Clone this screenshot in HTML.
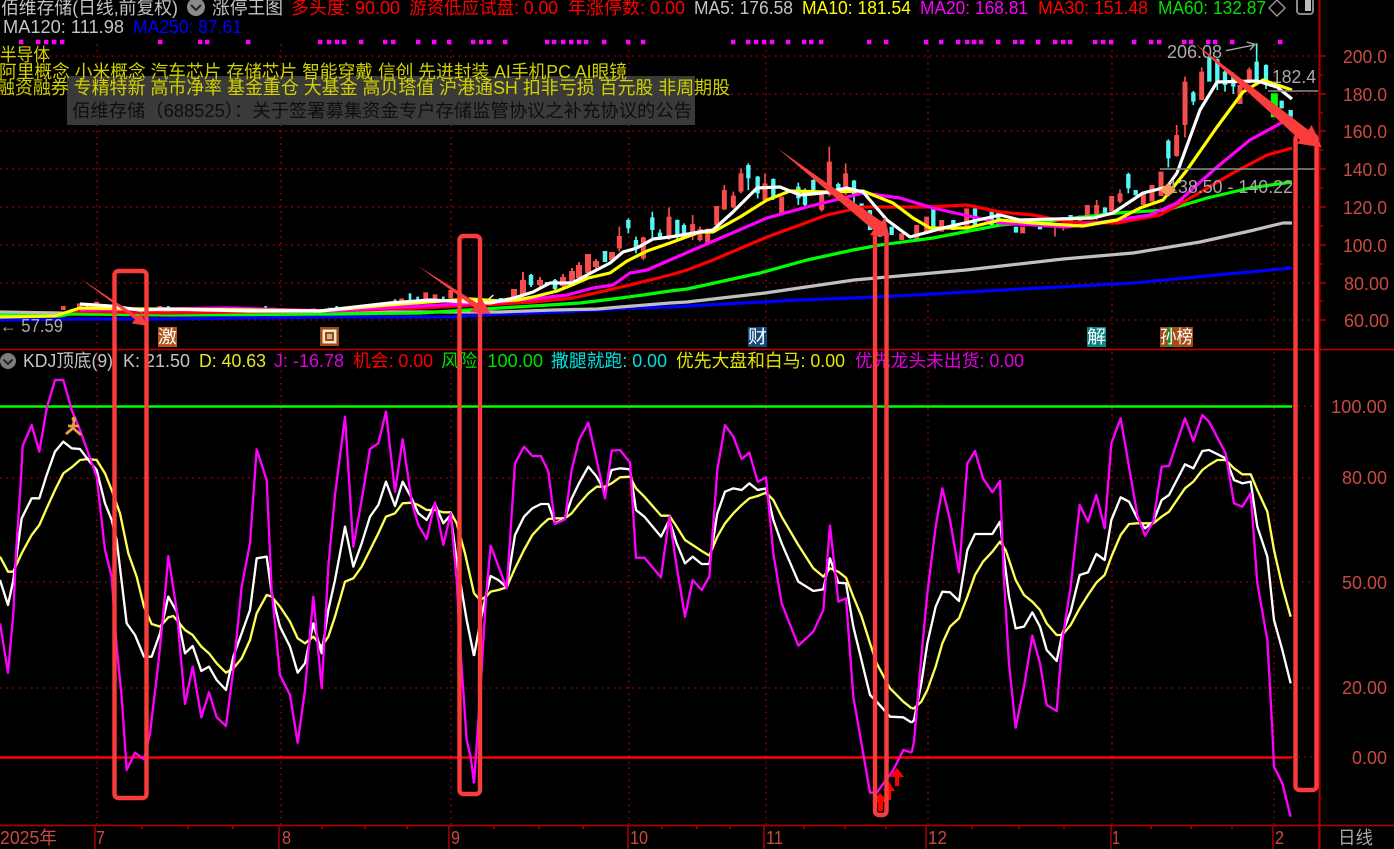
<!DOCTYPE html>
<html lang="zh">
<head>
<meta charset="utf-8">
<title>佰维存储 K线</title>
<style>
html,body{margin:0;padding:0;background:#000;width:1394px;height:849px;overflow:hidden}
svg{display:block}
text{font-family:"Liberation Sans","WenQuanYi Zen Hei","Noto Sans CJK SC",sans-serif;font-size:18px}
.ax{fill:#c94a40;font-size:18px}
.tag{fill:#d2d200;font-size:18px}
.dot{stroke:#9a0000;stroke-width:1.5;stroke-dasharray:1.6 4.6;fill:none}
.ma{fill:none;stroke-width:3.2;stroke-linejoin:round}
.k{fill:none;stroke-width:7;stroke-linejoin:round}
.ann{fill:none;stroke:#fb3c3c;stroke-width:4.4}
</style>
</head>
<body>
<svg width="1394" height="849" viewBox="0 0 1394 849" xmlns="http://www.w3.org/2000/svg">
<rect width="1394" height="849" fill="#000"/>

<!-- grid -->
<path class="dot" d="M0 56H1318M0 94H1318M0 131H1318M0 169H1318M0 207H1318M0 245H1318M0 283H1318M0 320H1318"/>
<path class="dot" d="M0 478H1318M0 582H1318M0 688H1318M1292 406H1318M1292 757H1318"/>
<path class="dot" d="M97 44V348M281 44V348M451 44V348M629 44V348M766 44V348M928 44V348M1112 44V348M1274 44V348"/>
<path class="dot" d="M97 352V825M281 352V825M451 352V825M629 352V825M766 352V825M928 352V825M1112 352V825M1274 352V825"/>

<!-- magenta signal dots -->
<path fill="none" stroke="#ff00ff" stroke-width="4.4" stroke-dasharray="4.4 100" d="M19 42H24M36 42H41M44 42H49M52 42H57M60 42H65M158 42H163M198 42H203M205 42H210M246 42H251M318 42H323M327 42H332M335 42H340M342 42H347M359 42H364M383 42H388M391 42H396M416 42H421M432 42H437M447 42H452M471 42H476M479 42H484M487 42H492M503 42H508M545 42H550M552 42H557M561 42H566M569 42H574M577 42H582M584 42H589M602 42H607M626 42H631M641 42H646M731 42H736M746 42H751M754 42H759M762 42H767M770 42H775M786 42H791M802 42H807M809 42H814M819 42H824M867 42H872M884 42H889M924 42H929M939 42H944M956 42H961M965 42H970M972 42H977M979 42H984M996 42H1001M1013 42H1018M1020 42H1025M1036 42H1041M1053 42H1058M1061 42H1066M1068 42H1073M1093 42H1098M1101 42H1106M1109 42H1114M1132 42H1137M1149 42H1154M1157 42H1162M1182 42H1187M1189 42H1194M1206 42H1211M1213 42H1218M1230 42H1235M1278 42H1283"/>

<!-- low candles -->
<g transform="translate(0 260) scale(.33333)">
<path fill="none" stroke="#f54d4d" stroke-width="14" d="M190 138V150M238 130V150M290 125V140M480 138V148M770 143V150M820 143V149M940 145V150M990 143V150M1035 140V150M1110 132V150M1135 135V145M1160 130V140M1205 115V135M1277 97V125M1305 103V120M1352 90V115"/>
<path fill="none" stroke="#54f6f6" stroke-width="8" d="M262 135V150M505 138V148M797 138V150M1010 138V150M1060 140V150M1185 118V135M1230 100V125M1253 110V130M1330 110V125"/>
<path fill="none" stroke="#fff" stroke-width="4" d="M1465 118L1480 105"/>
</g>
<!-- candles 500-620 -->
<path fill="none" stroke="#f54d4d" stroke-width="6" d="M514 289V298M523 280V295M540 280V285M563 277V286M572 271V283M579 265V278M588 254V273M596 261V267M612 252V260"/>
<path fill="none" stroke="#f54d4d" stroke-width="2" d="M523 272V297M540 277V287M563 274V288M572 268V285M579 262V280M596 259V269"/>
<path fill="none" stroke="#54f6f6" stroke-width="4.5" d="M501 298V301M531 275V285M547 282V285M555 280V289M605 251V262"/>
<path fill="none" stroke="#54f6f6" stroke-width="2" d="M531 274V287M555 279V290"/>

<!-- middle candles -->
<g transform="translate(600 130) scale(.33333)">
<path fill="none" stroke="#f54d4d" stroke-width="15" d="M58 318V355M130 322V385M207 260V320M278 282V318M300 297V330M323 297V338M350 228V285M373 180V238M400 197V232M423 130V185M495 160V210M545 200V255M665 195V240M688 95V195M737 130V190M905 310V330M950 285V335M980 260V310M1025 270V305M1100 235V290"/>
<path fill="none" stroke="#f54d4d" stroke-width="5" d="M58 290V365M130 320V390M207 232V330M278 255V330M300 290V335M323 295V345M373 165V240M400 185V235M423 115V190M495 130V215M665 190V245M688 50V200M737 100V195"/>
<path fill="none" stroke="#54f6f6" stroke-width="13" d="M85 270V295M108 330V355M157 262V300M180 308V325M232 270V315M252 285V320M445 105V145M473 140V190M520 147V205M595 170V205M615 180V225M640 150V180M715 162V185M762 152V195M785 220V245M810 240V300M840 300V320M875 290V315M1000 235V290M1060 270V300M1125 235V285M1175 245V285M1195 245V270"/>
<path fill="none" stroke="#54f6f6" stroke-width="5" d="M12 365V390M85 265V310M108 320V370M157 245V325M180 298V330M232 268V330M252 280V325M445 100V180M473 138V205M520 145V210M595 158V225M615 175V230M640 148V195M715 158V190M762 150V220"/>
</g>

<!-- right candles -->
<g transform="translate(1000 30) scale(.33333)">
<path fill="none" stroke="#f54d4d" stroke-width="15" d="M68 590V610M262 525V560M290 525V555M335 498V545M360 490V515M430 490V525M456 465V515M483 425V498M530 315V378M555 155V285M605 125V210M720 165V222M748 118V155"/>
<path fill="none" stroke="#f54d4d" stroke-width="5" d="M165 590V620M190 590V602M290 510V570M360 478V520M530 285V380M555 140V322M605 112V125M748 112V160"/>
<path fill="none" stroke="#54f6f6" stroke-width="13" d="M48 590V608M120 590V598M212 555V578M240 557V572M315 532V555M385 432V475M407 480V496M505 332V385M580 187V215M628 82V155M652 88V155M675 125V165M700 132V170M770 95V150M798 105V150M845 212V235M872 240V262"/>
<path fill="none" stroke="#54f6f6" stroke-width="5" d="M385 428V490M505 328V412M580 183V225M652 85V180M675 120V185M700 128V192M770 40V150M798 103V177"/>
<path fill="none" stroke="#00ff00" stroke-width="21" d="M823 190V262"/>
</g>

<!-- upper moving averages -->
<polyline class="ma" stroke="#0000ff" points="0,320 80,319 160,319 330,317 450,317 500,314 533,313 597,310 630,308 670,307 687,306 799,300 877,297 1022,289 1133,283 1217,275 1292,268"/>
<polyline class="ma" stroke="#c0c0c0" points="0,312 60,313 90,314 170,311 330,312 480,312 500,312 553,310 597,309 620,307 670,303 687,302 765,293 854,280 966,270 1063,259 1133,253 1200,242 1250,231 1283,223 1292,223"/>
<polyline class="ma" stroke="#00ff00" points="0,315 60,316 70,314 170,315 330,314 420,313 500,308 533,306 580,303 613,299 643,295 670,291 687,289 760,273 807,260 853,250 880,245 933,238 1000,225 1050,221 1117,213 1167,210 1207,198 1250,188 1292,182"/>
<polyline class="ma" stroke="#ff0000" points="70,311 165,313 233,312 330,311 420,308 500,304 533,302 573,298 600,292 630,285 670,275 687,270 713,260 767,237 827,215 863,207 927,207 967,205 1000,212 1033,215 1067,222 1117,223 1160,215 1187,200 1233,173 1267,155 1292,148"/>
<polyline class="ma" stroke="#ff00ff" points="80,310 165,309 225,308 330,311 400,307 500,302 533,299 567,295 593,288 613,285 630,273 647,270 670,260 723,237 767,218 807,207 863,193 900,198 933,208 1000,223 1067,227 1117,220 1150,215 1177,203 1217,167 1250,140 1292,117"/>
<polyline class="ma" stroke="#ffff00" points="0,317 55,316 80,308 140,309 165,309 250,310 320,311 400,304 470,299 500,301 517,300 533,297 557,291 572,285 588,278 610,273 627,261 647,251 670,243 700,232 713,232 740,217 767,200 790,191 827,192 863,191 893,203 913,218 930,228 967,228 1000,220 1033,223 1083,226 1117,220 1140,208 1163,200 1187,170 1217,127 1243,92 1263,80 1292,90"/>
<polyline class="ma" stroke="#ffffff" points="80,304 110,306 140,310 165,309 250,311 320,311 390,303 430,300 490,303 500,301 514,298 533,292 550,283 572,283 587,275 610,263 623,252 637,248 653,239 670,237 700,232 713,230 733,212 757,188 780,187 800,195 823,193 847,188 863,192 887,220 910,237 947,227 1000,215 1020,220 1093,218 1113,213 1143,193 1167,187 1177,173 1200,110 1217,82 1257,81 1277,87 1292,99"/>

<!-- tooltip box -->
<rect x="67" y="76" width="628" height="49" fill="#3a3a38"/>
<text x="72" y="117" textLength="620" lengthAdjust="spacingAndGlyphs" fill="#0e0e0e">佰维存储（688525）：关于签署募集资金专户存储监管协议之补充协议的公告</text>

<!-- concept tags -->
<text class="tag" x="0" y="61" textLength="50" lengthAdjust="spacingAndGlyphs">半导体</text>
<text class="tag" x="-1" y="78" textLength="628" lengthAdjust="spacingAndGlyphs">阿里概念 小米概念 汽车芯片 存储芯片 智能穿戴 信创 先进封装 AI手机PC AI眼镜</text>
<text class="tag" x="-3" y="94" textLength="733" lengthAdjust="spacingAndGlyphs">融资融券 专精特新 高市净率 基金重仓 大基金 高贝塔值 沪港通SH 扣非亏损 百元股 非周期股</text>

<!-- top header -->
<text x="1" y="14" textLength="177" lengthAdjust="spacingAndGlyphs" fill="#c4c4c4">佰维存储(日线,前复权)</text>
<circle cx="196" cy="7" r="9" fill="#8a8a8a"/>
<path d="M191 5l5 5 5-5" fill="none" stroke="#222" stroke-width="2"/>
<text x="212" y="14" textLength="71" lengthAdjust="spacingAndGlyphs" fill="#c4c4c4">涨停王图</text>
<text x="291" y="14" textLength="109" lengthAdjust="spacingAndGlyphs" fill="#ff0000">多头度: 90.00</text>
<text x="409" y="14" textLength="149" lengthAdjust="spacingAndGlyphs" fill="#ff0000">游资低应试盘: 0.00</text>
<text x="568" y="14" textLength="117" lengthAdjust="spacingAndGlyphs" fill="#ff0000">年涨停数: 0.00</text>
<text x="694" y="14" textLength="99" lengthAdjust="spacingAndGlyphs" fill="#c4c4c4">MA5: 176.58</text>
<text x="802" y="14" textLength="109" lengthAdjust="spacingAndGlyphs" fill="#ffff00">MA10: 181.54</text>
<text x="920" y="14" textLength="108" lengthAdjust="spacingAndGlyphs" fill="#ff00ff">MA20: 168.81</text>
<text x="1038" y="14" textLength="110" lengthAdjust="spacingAndGlyphs" fill="#ff0000">MA30: 151.48</text>
<text x="1158" y="14" textLength="108" lengthAdjust="spacingAndGlyphs" fill="#00e000">MA60: 132.87</text>
<path d="M1277 0l8 8-8 8-8-8z" fill="none" stroke="#999" stroke-width="1.4"/>
<rect x="1297" y="-3" width="16" height="17" rx="3" fill="none" stroke="#888" stroke-width="2"/>
<rect x="1305" y="0" width="6" height="11" fill="#bbb"/>
<text x="3" y="33" textLength="121" lengthAdjust="spacingAndGlyphs" fill="#c4c4c4">MA120: 111.98</text>
<text x="133" y="33" textLength="109" lengthAdjust="spacingAndGlyphs" fill="#0000ff">MA250: 87.61</text>

<!-- price annotations -->
<path d="M1160 169H1318M1268 91H1318" stroke="#8c8c8c" stroke-width="1.4" fill="none"/>
<text x="1167" y="58" textLength="55" lengthAdjust="spacingAndGlyphs" fill="#aaa">206.08</text>
<g transform="translate(1000 30) scale(.33333)"><path d="M678 62L762 45M740 36L765 43L750 60" fill="none" stroke="#aaa" stroke-width="4"/></g>
<text x="1272" y="83" textLength="44" lengthAdjust="spacingAndGlyphs" fill="#aaa">182.4</text>
<text x="1168" y="193" textLength="125" lengthAdjust="spacingAndGlyphs" fill="#a8a8a8">138.50 - 140.22</text>
<path d="M1168 183l8 7-8 7-8-7z" fill="#f49a5a"/>
<text x="0" y="332" textLength="63" lengthAdjust="spacingAndGlyphs" fill="#aaa">← 57.59</text>

<!-- event tags -->
<rect x="158" y="327" width="19" height="20" fill="#b4561c"/>
<text x="158" y="343" textLength="19" lengthAdjust="spacingAndGlyphs" fill="#fff">激</text>
<rect x="320" y="327" width="19" height="19" fill="#9a4c12"/>
<rect x="322.5" y="329.5" width="14" height="14" fill="#f4e6d0"/>
<rect x="325" y="332" width="9" height="9" fill="#9a4c12"/>
<rect x="327" y="334" width="5" height="5" fill="#d8b078"/>
<rect x="748" y="327" width="19" height="20" fill="#144a7a"/>
<text x="748" y="343" textLength="19" lengthAdjust="spacingAndGlyphs" fill="#fff">财</text>
<rect x="1087" y="327" width="19" height="20" fill="#0a8484"/>
<text x="1087" y="343" textLength="19" lengthAdjust="spacingAndGlyphs" fill="#fff">解</text>
<rect x="1160" y="327" width="33" height="20" fill="#a04c12"/>
<rect x="1167" y="327" width="5" height="20" fill="#2a8a2a"/>
<text x="1160" y="343" textLength="33" lengthAdjust="spacingAndGlyphs" fill="#fff">孙榜</text>

<!-- panel divider -->
<path d="M0 349.5H1394" stroke="#b00000" stroke-width="1.8"/>

<!-- lower header -->
<circle cx="8" cy="361" r="8" fill="#7c7c7c"/>
<path d="M3.5 359.5l4.5 4.5 4.5-4.5" fill="none" stroke="#222" stroke-width="2"/>
<text x="23" y="367" textLength="90" lengthAdjust="spacingAndGlyphs" fill="#c4c4c4">KDJ顶底(9)</text>
<text x="123" y="367" textLength="67" lengthAdjust="spacingAndGlyphs" fill="#c4c4c4">K: 21.50</text>
<text x="199" y="367" textLength="67" lengthAdjust="spacingAndGlyphs" fill="#e6e628">D: 40.63</text>
<text x="274" y="367" textLength="70" lengthAdjust="spacingAndGlyphs" fill="#e000e0">J: -16.78</text>
<text x="353" y="367" textLength="80" lengthAdjust="spacingAndGlyphs" fill="#ff0000">机会: 0.00</text>
<text x="441" y="367" textLength="102" lengthAdjust="spacingAndGlyphs" fill="#00e000">风险: 100.00</text>
<text x="551" y="367" textLength="116" lengthAdjust="spacingAndGlyphs" fill="#00e0e0">撒腿就跑: 0.00</text>
<text x="676" y="367" textLength="169" lengthAdjust="spacingAndGlyphs" fill="#e6e600">优先大盘和白马: 0.00</text>
<text x="855" y="367" textLength="169" lengthAdjust="spacingAndGlyphs" fill="#e000e0">优先龙头未出货: 0.00</text>

<!-- reference lines -->
<path d="M0 406.5H1292" stroke="#00ff00" stroke-width="2.6"/>
<path d="M0 757.5H1292" stroke="#ff0000" stroke-width="2.6"/>

<!-- KDJ -->
<g transform="translate(0 380) scale(.33333)">
<polyline class="k" stroke="#ffff55" points="0,530 24,575 40,575 65,520 95,465 118,435 140,385 165,330 190,280 215,262 240,240 265,237 290,240 315,280 335,330 360,400 385,520 410,590 432,680 455,732 480,740 505,712 520,708 555,750 578,765 604,800 627,820 650,850 678,878 700,865 725,835 750,780 770,700 800,645 815,650 840,680 870,725 893,775 915,790 940,770 965,800 985,770 1005,710 1035,605 1060,595 1085,560 1110,510 1135,460 1158,410 1185,400 1208,370 1235,368 1255,375 1280,390 1305,390 1330,397 1352,397 1370,430 1395,520 1422,640"/>
<polyline class="k" stroke="#ffffff" points="0,600 24,675 40,600 65,415 95,355 118,355 140,285 165,215 190,185 215,205 240,207 265,240 290,270 315,370 335,420 350,480 380,730 405,765 432,830 455,830 480,760 505,650 530,695 555,820 578,798 604,873 627,860 650,900 678,930 700,830 725,760 750,690 770,535 800,530 815,640 840,740 870,800 893,878 915,850 940,730 965,820 985,690 1005,600 1035,440 1060,560 1085,490 1110,410 1135,375 1158,305 1185,378 1208,305 1235,355 1255,400 1280,420 1305,372 1330,430 1352,405 1370,540 1400,720 1422,828"/>
<polyline class="k" stroke="#ff00ff" points="0,730 24,878 40,700 48,520 64,280 68,197 95,135 118,215 140,85 165,0 190,0 215,90 240,150 265,220 290,290 315,510 335,590 350,800 365,950 380,1170 405,1118 432,1138 450,1060 475,850 490,700 505,528 530,690 555,972 578,860 604,1012 627,937 650,1012 678,1038 700,870 725,620 750,490 770,208 800,300 815,630 840,885 870,945 893,1088 915,930 940,650 965,925 985,560 1005,345 1035,110 1060,500 1085,360 1110,207 1135,190 1158,95 1185,335 1208,178 1235,365 1255,435 1280,477 1305,367 1330,495 1352,400 1370,600 1380,790 1400,1080 1412,1130 1422,1210"/>
</g>
<g transform="translate(460 380) scale(.33333)">
<polyline class="k" stroke="#ffff55" points="42,640 60,660 78,650 92,635 115,630 140,622 165,565 192,510 217,465 243,437 265,417 285,415 315,415 335,400 357,372 385,340 410,320 435,320 455,310 480,292 510,290 528,325 553,350 603,407 628,407 650,440 675,480 698,495 725,513 748,527 772,470 795,430 820,400 845,375 868,355 893,348 918,338 940,360 965,410 1015,495 1060,565 1090,590 1110,565 1135,575 1158,593 1180,650 1205,710 1230,790 1250,850 1290,925 1330,965 1355,985"/>
<polyline class="k" stroke="#ffffff" points="42,828 60,730 78,645 92,588 115,600 140,622 165,465 192,410 217,385 243,372 265,372 285,430 315,415 335,355 357,310 385,260 410,290 435,335 455,270 480,265 510,268 528,390 553,410 603,470 628,420 650,490 675,550 698,530 725,552 748,552 772,400 795,335 820,325 845,330 868,310 893,330 918,325 940,420 965,490 1015,605 1060,633 1090,628 1110,535 1135,608 1158,610 1180,740 1230,945 1250,965 1290,1010 1330,1012 1355,1028"/>
<polyline class="k" stroke="#ff00ff" points="42,1210 60,950 78,650 92,497 140,625 150,480 165,250 192,200 217,228 243,228 265,275 285,432 315,418 335,270 357,180 385,128 410,240 435,355 455,212 480,210 510,248 528,533 553,533 603,592 628,410 650,560 675,710 698,600 725,630 748,590 772,270 795,135 820,170 845,237 868,218 893,305 918,292 940,520 965,670 1015,797 1060,755 1090,690 1110,437 1135,665 1158,655 1180,950 1230,1238 1250,1238 1300,1170 1330,1110 1355,1118"/>
</g>
<g transform="translate(914 380) scale(.33333)">
<polyline class="k" stroke="#ffff55" points="-7,985 0,985 22,965 40,930 65,860 85,790 108,740 135,715 160,650 183,585 207,545 235,515 258,485 275,510 305,600 330,645 355,665 378,690 398,730 428,765 445,765 470,735 497,685 522,645 547,608 572,585 592,530 620,465 645,432 670,430 693,430 718,430 743,410 765,395 813,325 838,305 865,270 885,255 910,240 935,240 960,265 985,283 1010,283 1030,330 1060,395 1080,510 1105,620 1130,710"/>
<polyline class="k" stroke="#ffffff" points="-7,1028 0,1020 22,910 40,790 65,680 85,635 108,637 135,663 160,510 183,462 207,462 235,462 258,425 270,530 285,650 305,745 330,740 355,697 378,740 398,810 428,843 445,760 470,695 497,585 522,577 547,522 572,540 592,420 620,352 645,365 670,415 693,445 718,425 743,360 765,345 813,253 838,265 865,213 885,210 935,235 960,300 985,310 1010,305 1030,440 1060,530 1080,720 1105,810 1130,910"/>
<polyline class="k" stroke="#ff00ff" points="-7,1118 0,1085 22,830 40,640 65,440 85,325 108,420 135,577 160,250 183,213 207,295 235,337 258,303 270,600 285,850 305,1043 330,920 355,767 378,850 398,975 428,993 445,780 470,620 497,375 522,425 547,345 572,445 592,190 620,115 645,260 670,405 693,467 718,425 743,260 765,258 813,115 838,183 865,105 885,125 935,220 960,370 985,380 1010,340 1030,610 1060,780 1075,1050 1080,1160 1105,1210 1130,1310"/>
</g>

<!-- man marker -->
<g fill="none" stroke="#eb9a48" stroke-width="2.8">
<circle cx="74" cy="419" r="2.4" fill="#eb9a48" stroke="none"/>
<path d="M74 421L73 428L66 434M73 428L81 435M68 426L79 426"/>
</g>

<!-- axes -->
<path d="M1319.5 0V849" stroke="#a80000" stroke-width="2.2"/>
<path d="M0 825.5H1394" stroke="#a80000" stroke-width="1.8"/>
<path stroke="#a80000" stroke-width="1.5" d="M1319 56h7M1319 94h7M1319 131h7M1319 169h7M1319 207h7M1319 245h7M1319 283h7M1319 320h7M1319 75h4M1319 113h4M1319 150h4M1319 188h4M1319 226h4M1319 264h4M1319 301h4"/>
<path stroke="#a80000" stroke-width="1.5" d="M95 825V849M279 825V849M449 825V849M628 825V849M764 825V849M926 825V849M1111 825V849M1273 825V849M1319 825V849"/>
<path stroke="#a80000" stroke-width="1.5" d="M142 825v4M188 825v4M233 825v4M322 825v4M365 825v4M407 825v4M494 825v4M539 825v4M583 825v4M662 825v4M697 825v4M730 825v4M804 825v4M845 825v4M886 825v4M972 825v4M1019 825v4M1064 825v4M1151 825v4M1191 825v4M1232 825v4"/>

<!-- axis labels -->
<text class="ax" x="1343" y="63" textLength="44" lengthAdjust="spacingAndGlyphs">200.0</text>
<text class="ax" x="1343" y="101" textLength="44" lengthAdjust="spacingAndGlyphs">180.0</text>
<text class="ax" x="1343" y="138" textLength="44" lengthAdjust="spacingAndGlyphs">160.0</text>
<text class="ax" x="1343" y="176" textLength="44" lengthAdjust="spacingAndGlyphs">140.0</text>
<text class="ax" x="1343" y="214" textLength="44" lengthAdjust="spacingAndGlyphs">120.0</text>
<text class="ax" x="1343" y="252" textLength="44" lengthAdjust="spacingAndGlyphs">100.0</text>
<text class="ax" x="1344" y="290" textLength="45" lengthAdjust="spacingAndGlyphs">80.00</text>
<text class="ax" x="1344" y="327" textLength="45" lengthAdjust="spacingAndGlyphs">60.00</text>
<text class="ax" x="1331" y="413" textLength="56" lengthAdjust="spacingAndGlyphs">100.00</text>
<text class="ax" x="1342" y="484" textLength="45" lengthAdjust="spacingAndGlyphs">80.00</text>
<text class="ax" x="1342" y="589" textLength="45" lengthAdjust="spacingAndGlyphs">50.00</text>
<text class="ax" x="1342" y="694" textLength="45" lengthAdjust="spacingAndGlyphs">20.00</text>
<text class="ax" x="1352" y="764" textLength="35" lengthAdjust="spacingAndGlyphs">0.00</text>
<text class="ax" x="0" y="844" textLength="57" lengthAdjust="spacingAndGlyphs">2025年</text>
<text class="ax" x="96" y="844" textLength="9" lengthAdjust="spacingAndGlyphs">7</text>
<text class="ax" x="282" y="844" textLength="9" lengthAdjust="spacingAndGlyphs">8</text>
<text class="ax" x="451" y="844" textLength="9" lengthAdjust="spacingAndGlyphs">9</text>
<text class="ax" x="630" y="844" textLength="18" lengthAdjust="spacingAndGlyphs">10</text>
<text class="ax" x="766" y="844" textLength="17" lengthAdjust="spacingAndGlyphs">11</text>
<text class="ax" x="928" y="844" textLength="19" lengthAdjust="spacingAndGlyphs">12</text>
<text class="ax" x="1112" y="844" textLength="8" lengthAdjust="spacingAndGlyphs">1</text>
<text class="ax" x="1275" y="844" textLength="9" lengthAdjust="spacingAndGlyphs">2</text>
<text x="1338" y="844" textLength="35" lengthAdjust="spacingAndGlyphs" fill="#a8a8a8">日线</text>

<!-- small up arrows -->
<g fill="#ff0000" stroke="none">
<path d="M880 793L889 802H883V811H878V802H872Z"/>
<path d="M889 782L895 791H891V800H887V791H883Z"/>
<path d="M897 768L904 777H899V786H895V777H890Z"/>
</g>

<!-- hand-drawn annotations -->
<rect class="ann" x="114.5" y="271" width="32" height="527" rx="4"/>
<rect class="ann" x="459.5" y="236" width="20.5" height="558" rx="4"/>
<rect class="ann" x="875" y="232" width="11.5" height="583" rx="4"/>
<rect class="ann" x="1295.5" y="135" width="21" height="655" rx="4"/>
<g fill="#fb3c3c" stroke="none">
<g transform="translate(0 260) scale(.33333)"><path d="M240 55L415 170L425 155L437 197L395 190L405 178Z"/></g>
<path d="M418 266L477 303L481 298L491 314L470 312L474 307Z"/>
<g transform="translate(600 130) scale(.33333)"><path d="M533 55L845 275L855 262L868 320L810 315L820 300Z"/></g>
<g transform="translate(1000 30) scale(.33333)"><path d="M582 38L925 300L935 285L965 352L890 340L900 330Z"/></g>
</g>
</svg>
</body>
</html>
